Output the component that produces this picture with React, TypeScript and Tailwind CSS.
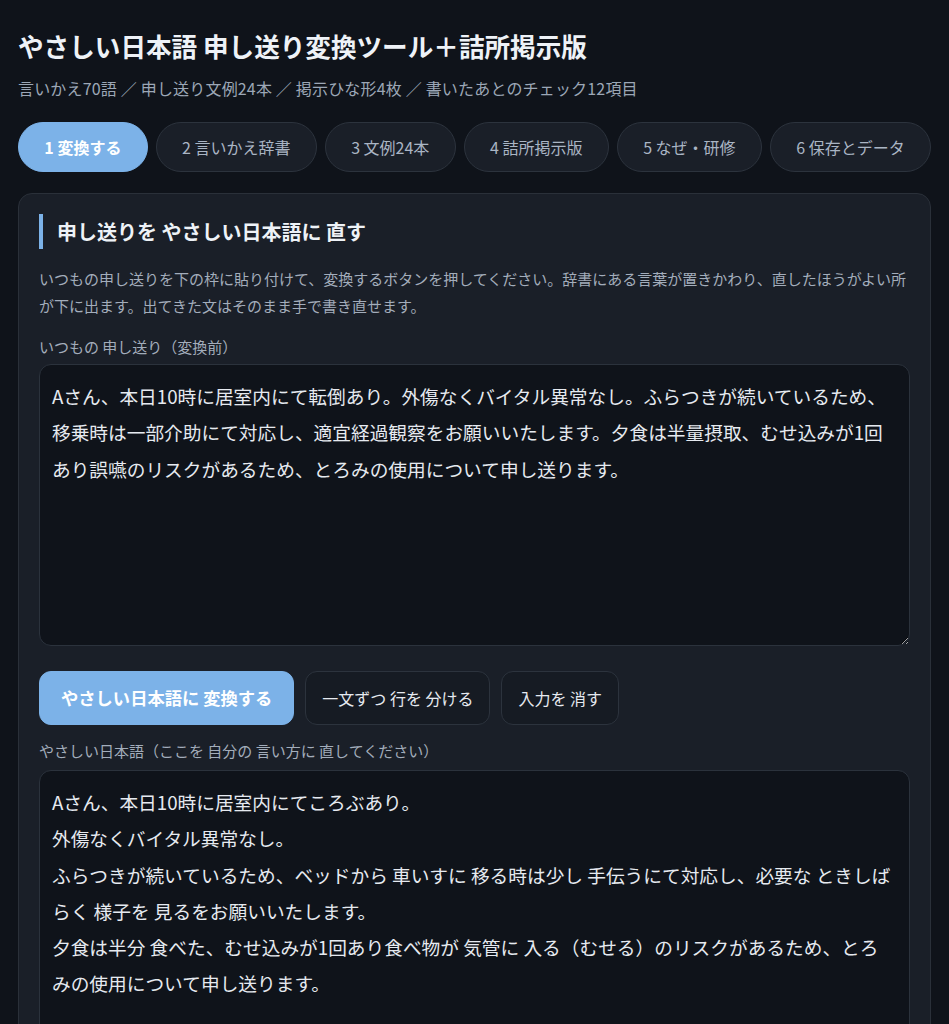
import { useState } from 'react';

const tabs = ['1 変換する', '2 言いかえ辞書', '3 文例24本', '4 詰所掲示版', '5 なぜ・研修', '6 保存とデータ'];

const sourceText =
  'Aさん、本日10時に居室内にて転倒あり。外傷なくバイタル異常なし。ふらつきが続いているため、移乗時は一部介助にて対応し、適宜経過観察をお願いいたします。夕食は半量摂取、むせ込みが1回あり誤嚥のリスクがあるため、とろみの使用について申し送ります。';

const easyText = [
  'Aさん、本日10時に居室内にてころぶあり。',
  '外傷なくバイタル異常なし。',
  'ふらつきが続いているため、ベッドから 車いすに 移る時は少し 手伝うにて対応し、必要な ときしばらく 様子を 見るをお願いいたします。',
  '夕食は半分 食べた、むせ込みが1回あり食べ物が 気管に 入る（むせる）のリスクがあるため、とろみの使用について申し送ります。',
].join('\n');

export default function App() {
  const [active, setActive] = useState(0);
  const [input, setInput] = useState(sourceText);
  const [output, setOutput] = useState(easyText);

  return (
    <div className="min-h-screen bg-[#0f131a] px-[18px] pt-[28px] pb-10 font-['Noto_Sans_CJK_JP',sans-serif] text-[#e6eaf0]">
      <h1 className="text-[25.6px] font-bold leading-[36px] text-[#eef2f7]">
        やさしい日本語 申し送り変換ツール＋詰所掲示版
      </h1>
      <p className="mt-3 text-[16px] leading-[24px] tracking-[0.18px] text-[#9ca7b6]">
        言いかえ70語 ／ 申し送り文例24本 ／ 掲示ひな形4枚 ／ 書いたあとのチェック12項目
      </p>

      {/* tabs */}
      <div className="mt-[22px] flex flex-wrap gap-2">
        {tabs.map((t, i) => (
          <button
            key={t}
            onClick={() => setActive(i)}
            className={
              i === active
                ? 'flex-auto whitespace-nowrap rounded-full border border-[#7cb2e8] bg-[#7cb2e8] px-[25px] py-3 text-[16px] font-bold leading-6 text-white'
                : 'flex-auto whitespace-nowrap rounded-full border border-[#2c333d] bg-[#1a1f28] px-[25px] py-3 text-[16px] leading-6 text-[#aab5c4]'
            }
          >
            {t}
          </button>
        ))}
      </div>

      <section className="mt-[21px] rounded-[14px] border border-[#2a3039] bg-[#1a1f28] p-5">
        <h2 className="border-l-4 border-[#7cb2e8] pl-[14px] text-[20px] font-bold leading-[35px] text-[#eef2f7]">
          申し送りを やさしい日本語に 直す
        </h2>
        <p className="mt-4 text-[15px] leading-[27px] text-[#a3adbb]">
          いつもの申し送りを下の枠に貼り付けて、変換するボタンを押してください。辞書にある言葉が置きかわり、直したほうがよい所が下に出ます。出てきた文はそのまま手で書き直せます。
        </p>

        <label className="mt-[17px] mb-[6px] block text-[15px] leading-[22px] text-[#a3adbb]">
          いつもの 申し送り（変換前）
        </label>
        <textarea
          value={input}
          onChange={(e) => setInput(e.target.value)}
          className="block h-[282px] w-full rounded-xl border border-[#2b323c] bg-[#0f131a] px-3 py-[13px] text-[18.7px] leading-[36.3px] text-[#e6eaf0] outline-none"
        />

        <div className="mt-[25px] flex gap-[11px]">
          <button className="rounded-xl border border-[#7cb2e8] bg-[#7cb2e8] px-[21px] py-[14px] text-[17.3px] font-bold leading-6 text-white">
            やさしい日本語に 変換する
          </button>
          <button className="rounded-xl border border-[#2c333d] bg-[#161b23] px-4 py-[14px] text-[16px] leading-6 text-[#e6eaf0]">
            一文ずつ 行を 分ける
          </button>
          <button
            onClick={() => setInput('')}
            className="rounded-xl border border-[#2c333d] bg-[#161b23] px-4 py-[14px] text-[16px] leading-6 text-[#e6eaf0]"
          >
            入力を 消す
          </button>
        </div>

        <label className="mt-[15px] mb-2 block text-[15px] leading-[22px] text-[#a3adbb]">
          やさしい日本語（ここを 自分の 言い方に 直してください）
        </label>
        <textarea
          value={output}
          onChange={(e) => setOutput(e.target.value)}
          className="block h-[282px] w-full rounded-xl border border-[#2b323c] bg-[#0f131a] px-3 py-[13px] text-[18.7px] leading-[36.3px] text-[#e6eaf0] outline-none"
        />
      </section>
    </div>
  );
}
